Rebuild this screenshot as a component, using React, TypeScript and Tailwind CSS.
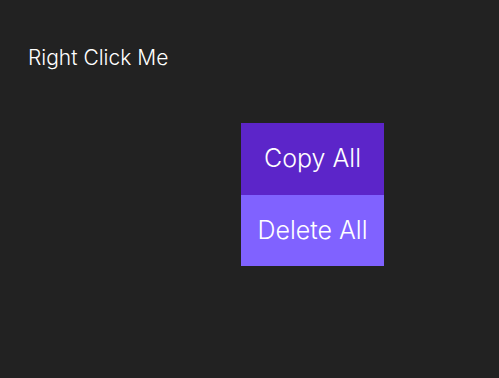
export default function App() {
  return (
    <div className="relative h-[378px] w-[499px] bg-[#222222] text-white" style={{ fontFamily: 'Inter, "Noto Sans", sans-serif' }}>
      <div className="pl-[28px] pt-[44px] text-[21px] font-light leading-[28px]">Right Click Me</div>
      <ul className="absolute left-[241px] top-[123px] w-[143px] text-[25px] font-light">
        <li className="flex h-[72px] items-center justify-center bg-[#5c25c9]">Copy All</li>
        <li className="flex h-[71px] items-center justify-center bg-[#8062ff]">Delete All</li>
      </ul>
    </div>
  );
}
